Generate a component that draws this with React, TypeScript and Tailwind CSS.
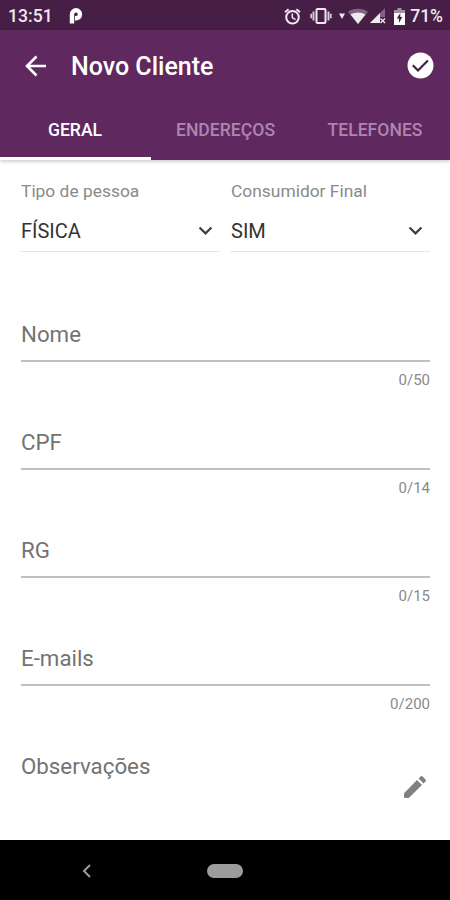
import { MdExpandMore } from 'react-icons/md';

type SelectItem = {
  label: string;
  value: string;
};

type Field = {
  label: string;
  counter: string;
};

const tabs = ['GERAL', 'ENDEREÇOS', 'TELEFONES'];

const selects: SelectItem[] = [
  { label: 'Tipo de pessoa', value: 'FÍSICA' },
  { label: 'Consumidor Final', value: 'SIM' },
];

const fields: Field[] = [
  { label: 'Nome', counter: '0/50' },
  { label: 'CPF', counter: '0/14' },
  { label: 'RG', counter: '0/15' },
  { label: 'E-mails', counter: '0/200' },
];

function StatusBar() {
  return (
    <div className="flex h-[30px] shrink-0 items-center bg-[#461e46] pl-2 pr-[7px] pt-[2px] text-[#f0e8f0]">
      <span className="text-[17.600px] font-medium leading-5">13:51</span>
      <svg className="ml-[16px] h-4 w-[14px]" viewBox="0 0 14 16" fill="none" stroke="white">
        <path d="M3 15.500V6.300a4 4 0 1 1 4 4H6" strokeWidth="4.400" />
      </svg>
      <div className="ml-auto flex items-center">
        <svg className="h-[17px] w-[17px]" viewBox="0 0 17 17" fill="none" stroke="currentColor">
          <circle cx="8.500" cy="9.300" r="6.300" strokeWidth="2" />
          <path d="M1 4.300L4.600 1.200M16 4.300L12.400 1.200" strokeWidth="2" />
          <path d="M8.300 5.500v4.200l3.200 2" strokeWidth="1.500" />
        </svg>
        <svg className="ml-[9px] h-[16px] w-[22px]" viewBox="0 0 22 16">
          <rect x="6.500" y="1" width="9" height="14" rx="1" fill="none" stroke="currentColor" strokeWidth="2" />
          <path d="M2.500 3.500H4.500v9H2.500zM17.500 3.500h2v9h-2z" fill="currentColor" opacity="0.85" />
          <path d="M0.300 5.800h1.700v4.400H0.300zM20 5.800h1.700v4.400H20z" fill="currentColor" opacity="0.85" />
        </svg>
        <svg className="ml-[7px] h-[6px] w-[6px]" viewBox="0 0 6 6" fill="currentColor">
          <path d="M0 0.500h6L3 6z" />
        </svg>
        <svg className="ml-[3px] h-[16px] w-[20px]" viewBox="0 0 20 16" fill="currentColor">
          <path d="M0 4C5.500-.3 14.500-.3 20 4L10 16z" opacity="0.35" />
          <path d="M2.500 6.500C7 3.800 13 3.800 17.500 6.500L10 16z" />
        </svg>
        <svg className="ml-[2px] h-[16px] w-[16px]" viewBox="0 0 16 16" fill="currentColor">
          <path d="M15 0v9H9v6H0z" opacity="0.35" />
          <path d="M10 5v10H0z" />
          <path d="M10.500 10.500l4.500 4.500m0-4.500l-4.500 4.500" stroke="currentColor" strokeWidth="1.300" />
        </svg>
        <svg className="ml-[8px] h-[17px] w-[11px]" viewBox="0 0 11 17">
          <path d="M3.500 0h4v2H11v3H0V2h3.500z" fill="#a48fa4" />
          <path d="M0 5h11v12H0z" fill="white" />
          <path d="M6.300 5v4h2L4.900 15v-4.500H2.700z" fill="#461e46" />
        </svg>
        <span className="ml-[5px] text-[17.500px] font-medium leading-5">71%</span>
      </div>
    </div>
  );
}

function Toolbar() {
  return (
    <div className="flex h-[71px] items-center pl-[25px] pr-[16px] text-white">
      <svg className="size-[22px]" viewBox="0 0 22 22" fill="none" stroke="currentColor" strokeWidth="2.600">
        <path d="M21 11H2.500M11.500 1.500L2 11l9.500 9.500" />
      </svg>
      <h1 className="ml-[24px] pt-[3px] text-[25px] font-medium leading-8">Novo Cliente</h1>
      <svg className="ml-auto size-[27px]" viewBox="0 0 27 27" fill="none">
        <circle cx="13.500" cy="13.500" r="13" fill="white" />
        <path d="M5.800 13.200l5.200 5.300L20.900 8.500" stroke="#3c2340" strokeWidth="2.200" />
      </svg>
    </div>
  );
}

function Tabs() {
  return (
    <div className="grid h-[59px] grid-cols-[151px_149px_150px]">
      {tabs.map((tab, index) => (
        <div
          key={tab}
          className={
            index === 0
              ? 'flex items-center justify-center border-b-[3px] border-white pr-[1px] pt-[2px] text-white'
              : 'flex items-center justify-center border-b-[3px] border-transparent pt-[2px] text-[#ad85af]'
          }
        >
          <span className="text-[17.600px] font-medium leading-6">{tab}</span>
        </div>
      ))}
    </div>
  );
}

function SelectField({ label, value }: SelectItem) {
  return (
    <div className="flex flex-col border-b border-[#e6e6e6]">
      <span className="pl-[1px] text-[17.400px] leading-6 text-[#8a8a8a]">{label}</span>
      <div className="mt-[14px] flex h-[34px] items-start justify-between pr-[1px]">
        <span className="pl-[1px] text-[20px] leading-7 text-[#333333]">{value}</span>
        <MdExpandMore className="size-[27px] text-[#404040]" />
      </div>
    </div>
  );
}

function TextField({ label, counter }: Field) {
  return (
    <div className="h-[108px]">
      <div className="h-[42px] border-b-2 border-[#c0c0c0] text-[22.300px] leading-7 text-[#737373]">{label}</div>
      <div className="mt-[8px] text-right text-[15px] leading-5 text-[#8a8a8a]">{counter}</div>
    </div>
  );
}

export default function App() {
  return (
    <div className="flex h-[900px] w-[450px] flex-col overflow-hidden bg-white font-['Roboto',sans-serif]">
      <StatusBar />
      <header className="z-10 shrink-0 bg-[#5f285f] shadow-[0_1px_4px_rgba(0,0,0,0.25)]">
        <Toolbar />
        <Tabs />
      </header>

      <main className="flex-1 px-[20px] pt-[19px]">
        <div className="grid grid-cols-2 gap-[10px]">
          {selects.map((item) => (
            <SelectField key={item.label} {...item} />
          ))}
        </div>

        <div className="mt-[68px] pl-[1px]">
          {fields.map((field) => (
            <TextField key={field.label} {...field} />
          ))}
        </div>

        <div className="flex justify-between pl-[1px]">
          <span className="text-[22.300px] leading-7 text-[#737373]">Observações</span>
          <svg className="mr-[3px] mt-[23px] size-[24px]" viewBox="0 0 24 24" fill="#808080">
            <path d="M14 5l5 5L6.300 22.600Q5.800 23.100 5 23.100H2Q1 23.100 1 22.100V19Q1 18.300 1.500 17.800z" />
            <path d="M15.600 3.600l2-2q1-1 2 0l2.900 2.900q1 1 0 2l-2 2z" />
          </svg>
        </div>
      </main>

      <nav className="grid h-[60px] shrink-0 grid-cols-[207px_36px_207px] items-center bg-black pt-[1px]">
        <svg className="ml-[82px] h-[14px] w-[10px]" viewBox="0 0 10 14" fill="none" stroke="#9a9a9a" strokeWidth="2">
          <path d="M8 1L2 7l6 6" />
        </svg>
        <div className="h-[14px] rounded-full bg-[#9c9c9c]" />
      </nav>
    </div>
  );
}
